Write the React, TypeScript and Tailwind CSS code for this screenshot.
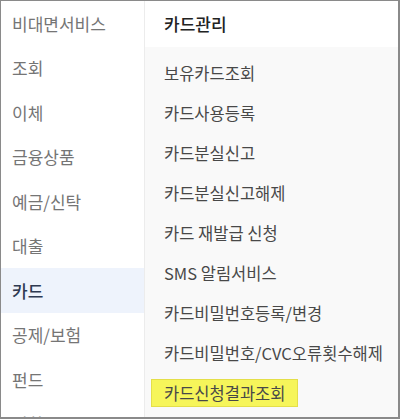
const categories = [
  '비대면서비스',
  '조회',
  '이체',
  '금융상품',
  '예금/신탁',
  '대출',
  '카드',
  '공제/보험',
  '펀드',
  '외환',
];

const cardMenus = [
  '보유카드조회',
  '카드사용등록',
  '카드분실신고',
  '카드분실신고해제',
  '카드 재발급 신청',
  'SMS 알림서비스',
  '카드비밀번호등록/변경',
  '카드비밀번호/CVC오류횟수해제',
  '카드신청결과조회',
];

export default function App() {
  return (
    <div
      className="w-[400px] h-[419px] overflow-hidden bg-white border border-r-2 border-b-2 border-[#8a8a8a] flex"
      style={{ fontFamily: '"Noto Sans CJK KR", "Noto Sans", sans-serif' }}
    >
      {/* Category list */}
      <nav className="w-[144px] shrink-0 border-r border-[#ececec] flex flex-col">
        {categories.map((label) => {
          const active = label === '카드';
          return (
            <div
              key={label}
              className={
                active
                  ? 'h-[44.5px] shrink-0 flex items-center pl-[11px] text-[17px] font-medium text-[#2e3a52] bg-[#eef3fc]'
                  : 'h-[44.5px] shrink-0 flex items-center pl-[11px] text-[17px] text-[#757575]'
              }
            >
              {label}
            </div>
          );
        })}
      </nav>

      {/* Sub menu */}
      <section className="flex-1 flex flex-col">
        <div className="h-[46px] shrink-0 flex items-center px-[19px] text-[17px] font-medium text-[#222] bg-white">
          카드관리
        </div>
        <ul className="flex-1 bg-[#f9f9f9] pt-[6px] mr-[4px]">
          {cardMenus.map((label) => {
            const marked = label === '카드신청결과조회';
            return (
              <li
                key={label}
                className="h-[40px] flex items-center px-[19px] text-[16.5px] text-[#484848] whitespace-nowrap"
              >
                {marked ? (
                  <span className="-ml-[13px] h-[28px] px-[12px] flex items-center bg-[#f6f55a] border border-[#e4df49]">
                    {label}
                  </span>
                ) : (
                  label
                )}
              </li>
            );
          })}
        </ul>
      </section>
    </div>
  );
}
